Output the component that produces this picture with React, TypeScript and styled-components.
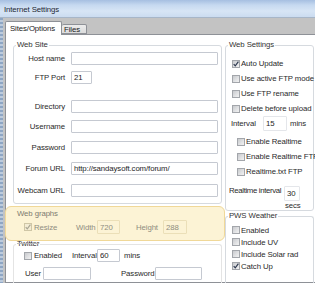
import React from "react";
import styled, { createGlobalStyle } from "styled-components";

const Global = createGlobalStyle`
  html, body { margin: 0; padding: 0; background: #fff; }
  body { font-family: "Liberation Sans", Arial, sans-serif; }
  * { box-sizing: border-box; }
`;

const Window = styled.div`
  width: 315px;
  height: 283px;
  overflow: hidden;
  display: flex;
  flex-direction: column;
  font-size: 7.8px;
  letter-spacing: -0.1px;
  color: #222;
`;

const TitleBar = styled.div`
  height: 18px;
  flex: none;
  display: flex;
  align-items: center;
  padding: 2px 0 0 4px;
  color: #1c2633;
  background: linear-gradient(180deg, #a6bfe1 0%, #c6d9f0 30%, #d7e5f5 65%, #cbdcf0 100%);
  border-bottom: 1px solid #a7b6c8;
`;

const Frame = styled.div`
  flex: 1;
  min-height: 0;
  display: flex;
  padding-left: 3px;
  background: repeating-linear-gradient(180deg, #8ea6c4 0 2px, #bccbdd 2px 4px);
`;

const Body = styled.div`
  flex: 1;
  min-width: 0;
  display: flex;
  flex-direction: column;
  padding-left: 2px;
  background: #c3c3c3;
`;

const TabStrip = styled.div`
  height: 16px;
  flex: none;
  display: flex;
  align-items: flex-end;
  position: relative;
  z-index: 1;
`;

const Tab = styled.div<{ $active?: boolean }>`
  width: ${(p) => (p.$active ? "57px" : "25px")};
  height: ${(p) => (p.$active ? "14px" : "10px")};
  margin-bottom: ${(p) => (p.$active ? "-1px" : "0")};
  display: flex;
  align-items: center;
  padding-left: ${(p) => (p.$active ? "4px" : "2px")};
  border: 1px solid #8e9197;
  border-bottom: ${(p) => (p.$active ? "none" : "1px solid #8e9197")};
  border-left: ${(p) => (p.$active ? "1px solid #8e9197" : "none")};
  background: ${(p) => (p.$active ? "#fff" : "linear-gradient(180deg,#ececec,#dcdcdc)")};
  border-radius: 2px 2px 0 0;
  white-space: nowrap;
  color: #1a1a1a;
`;

const Panel = styled.div`
  flex: 1;
  min-height: 0;
  margin-right: -8px;
  background: #fff;
  border: 1px solid #8e9197;
  display: grid;
  grid-template-columns: 209px 89px;
  column-gap: 3px;
  align-items: start;
  padding: 5px 0 0 7px;
`;

const Column = styled.div`
  display: flex;
  flex-direction: column;
  min-width: 0;
`;

const Group = styled.fieldset<{ $border?: string; $mt?: number; $fill?: boolean }>`
  margin: ${(p) => p.$mt ?? 0}px 0 0 0;
  padding: 0;
  min-width: 0;
  border: 1px solid ${(p) => p.$border ?? "#d6dadf"};
  border-radius: 3px;
  ${(p) => (p.$fill ? "border-bottom: none; border-radius: 3px 3px 0 0; min-height: 80px;" : "")}
`;

const Legend = styled.legend<{ $muted?: boolean; $strike?: boolean }>`
  margin-left: 2px;
  padding: 0 1px;
  height: 10px;
  line-height: 10px;
  color: ${(p) => (p.$muted ? "#7d7b70" : "#333")};
  text-decoration: ${(p) => (p.$strike ? "line-through" : "none")};
  text-decoration-color: #b9b9b9;
`;

const FieldGrid = styled.div`
  display: grid;
  grid-template-columns: 51px 147px;
  grid-template-rows: 19px 29px 20px 21px 21px 22px 13px;
  column-gap: 6px;
  align-items: start;
  padding: 2px 0 6px 0;
`;

const FieldLabel = styled.label`
  height: 13px;
  line-height: 13px;
  text-align: right;
  white-space: nowrap;
  color: #2a2a2a;
`;

const Input = styled.input<{ $w?: number; $h?: number; $disabled?: boolean; $faint?: boolean }>`
  width: ${(p) => (p.$w ? `${p.$w}px` : "100%")};
  height: ${(p) => p.$h ?? 13}px;
  flex: none;
  justify-self: start;
  margin: 0;
  padding: 0 2px;
  font: inherit;
  letter-spacing: inherit;
  color: ${(p) => (p.$disabled ? "#8f8d80" : "#1e1e1e")};
  background: ${(p) => (p.$disabled ? "transparent" : "#fff")};
  border: 1px solid
    ${(p) => (p.$disabled ? "#ebdfb8" : p.$faint ? "#e4e6ea" : "#c5c9d1")};
  border-radius: 1px;
  outline: none;
`;

const Highlight = styled.div`
  margin: 2px -3px 0 -8px;
  padding: 2px 2px 5px 7px;
  background: #fcf3d5;
  border: 1px solid #f0d898;
  border-radius: 6px;
`;

const Row = styled.div<{ $mt?: number; $pl?: number; $h?: number }>`
  display: flex;
  align-items: center;
  height: ${(p) => p.$h ?? 13}px;
  margin-top: ${(p) => p.$mt ?? 0}px;
  padding-left: ${(p) => p.$pl ?? 0}px;
  white-space: nowrap;
`;

const Text = styled.span<{ $w?: number; $ml?: number; $muted?: boolean }>`
  flex: none;
  width: ${(p) => (p.$w ? `${p.$w}px` : "auto")};
  margin-left: ${(p) => p.$ml ?? 0}px;
  color: ${(p) => (p.$muted ? "#8f8d80" : "#2a2a2a")};
  white-space: nowrap;
`;

const Box = styled.span<{ $disabled?: boolean }>`
  width: 8px;
  height: 8px;
  flex: none;
  display: inline-flex;
  align-items: center;
  justify-content: center;
  margin-right: 1px;
  border: 1px solid ${(p) => (p.$disabled ? "#cfc6a6" : "#a3a6ab")};
  background: ${(p) =>
    p.$disabled ? "#f3ecd4" : "linear-gradient(135deg, #c8cacd 0%, #e2e3e5 60%, #f2f2f2 100%)"};
`;

const CheckItem = styled.label<{ $indent?: number; $h?: number }>`
  display: flex;
  align-items: center;
  height: ${(p) => p.$h ?? 15}px;
  padding-left: ${(p) => p.$indent ?? 6}px;
  white-space: nowrap;
  color: #2a2a2a;
`;

const CheckList = styled.div<{ $pt?: number }>`
  display: flex;
  flex-direction: column;
  padding-top: ${(p) => p.$pt ?? 0}px;
`;

const Stack = styled.div`
  display: flex;
  flex-direction: column;
  align-items: flex-start;
`;

const Secs = styled.span`
  line-height: 9px;
  height: 9px;
  padding-left: 1px;
  color: #2a2a2a;
`;

const LabelTop = styled.span<{ $w: number; $pl?: number }>`
  width: ${(p) => p.$w}px;
  padding-left: ${(p) => p.$pl ?? 0}px;
  line-height: 10px;
  flex: none;
  white-space: nowrap;
  letter-spacing: -0.35px;
  color: #2a2a2a;
`;

const TopRow = styled.div<{ $mt?: number }>`
  display: flex;
  align-items: flex-start;
  margin-top: ${(p) => p.$mt ?? 0}px;
`;

function Check({ checked, disabled }: { checked?: boolean; disabled?: boolean }) {
  return (
    <Box $disabled={disabled}>
      {checked && (
        <svg width="6" height="6" viewBox="0 0 6 6">
          <path
            d="M0.7 3.1 L2.3 4.9 L5.4 0.7"
            fill="none"
            stroke={disabled ? "#a9a593" : "#2f3a50"}
            strokeWidth="1.2"
          />
        </svg>
      )}
    </Box>
  );
}

const siteFields: { label: string; value?: string; w?: number }[] = [
  { label: "Host name" },
  { label: "FTP Port", value: "21", w: 21 },
  { label: "Directory" },
  { label: "Username" },
  { label: "Password" },
  { label: "Forum URL", value: "http://sandaysoft.com/forum/" },
  { label: "Webcam URL" },
];

export default function App() {
  return (
    <>
      <Global />
      <Window>
        <TitleBar>Internet Settings</TitleBar>
        <Frame>
          <Body>
            <TabStrip>
              <Tab $active>Sites/Options</Tab>
              <Tab>Files</Tab>
            </TabStrip>
            <Panel>
              <Column>
                <Group>
                  <Legend>Web Site</Legend>
                  <FieldGrid>
                    {siteFields.map((f) => (
                      <React.Fragment key={f.label}>
                        <FieldLabel>{f.label}</FieldLabel>
                        <Input readOnly value={f.value ?? ""} $w={f.w} />
                      </React.Fragment>
                    ))}
                  </FieldGrid>
                </Group>

                <Highlight>
                  <Group $border="transparent">
                    <Legend $muted>Web graphs</Legend>
                    <Row $mt={1} $h={14} $pl={10}>
                      <Check checked disabled />
                      <Text $w={42} $ml={1} $muted>Resize</Text>
                      <Text $w={21} $muted>Width</Text>
                      <Input readOnly value="720" $w={23} $h={14} $disabled />
                      <Text $w={27} $ml={16} $muted>Height</Text>
                      <Input readOnly value="288" $w={24} $h={14} $disabled />
                    </Row>
                  </Group>
                </Highlight>

                <Group $mt={-2} $border="#e4e4e4" $fill>
                  <Legend $strike>Twitter</Legend>
                  <Row $pl={10}>
                    <Check />
                    <Text $w={38} $ml={1}>Enabled</Text>
                    <Text $w={25}>Interval</Text>
                    <Input readOnly value="60" $w={23} />
                    <Text $ml={4}>mins</Text>
                  </Row>
                  <Row $mt={5} $pl={11}>
                    <Text $w={18}>User</Text>
                    <Input readOnly value="" $w={48} />
                    <Text $w={34} $ml={30}>Password</Text>
                    <Input readOnly value="" $w={47} />
                  </Row>
                </Group>
              </Column>

              <Column>
                <Group>
                  <Legend>Web Settings</Legend>
                  <CheckList $pt={6}>
                    <CheckItem><Check checked />Auto Update</CheckItem>
                    <CheckItem><Check />Use active FTP mode</CheckItem>
                    <CheckItem><Check />Use FTP rename</CheckItem>
                    <CheckItem><Check />Delete before upload</CheckItem>
                  </CheckList>
                  <Row $h={15} $pl={5}>
                    <Text $w={32}>Interval</Text>
                    <Input readOnly value="15" $w={24} $h={15} $faint />
                    <Text $ml={3}>mins</Text>
                  </Row>
                  <CheckList $pt={3}>
                    <CheckItem $indent={11}><Check />Enable Realtime</CheckItem>
                    <CheckItem $indent={11}><Check />Enable Realtime FTP</CheckItem>
                    <CheckItem $indent={11}><Check />Realtime.txt FTP</CheckItem>
                  </CheckList>
                  <TopRow $mt={7}>
                    <LabelTop $w={58} $pl={3}>Realtime interval</LabelTop>
                    <Stack>
                      <Input readOnly value="30" $w={16} $h={15} $faint />
                      <Secs>secs</Secs>
                    </Stack>
                  </TopRow>
                </Group>

                <Group $fill>
                  <Legend>PWS Weather</Legend>
                  <CheckList $pt={3}>
                    <CheckItem $h={12}><Check />Enabled</CheckItem>
                    <CheckItem $h={12}><Check />Include UV</CheckItem>
                    <CheckItem $h={12}><Check />Include Solar rad</CheckItem>
                    <CheckItem $h={12}><Check checked />Catch Up</CheckItem>
                  </CheckList>
                </Group>
              </Column>
            </Panel>
          </Body>
        </Frame>
      </Window>
    </>
  );
}
